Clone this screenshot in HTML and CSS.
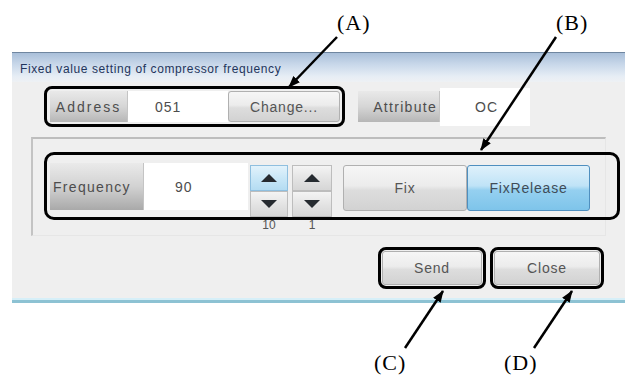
FILE: index.html
```html
<html>
<head>
  <title>Fixed value setting of compressor frequency</title>
  <link rel="stylesheet" href="styles.css">
</head>
<body>

  <div class="page">
    <div class="dialog">
      <div class="titlebar">Fixed value setting of compressor frequency</div>

      <div class="dialog-body">
        <div class="row-top">
          <div class="callout callout-a">
            <span class="label label-address">Address</span>
            <span class="field field-address">051</span>
            <button class="btn btn-change">Change...</button>
          </div>
          <span class="label label-attr">Attribute</span>
          <span class="field field-oc">OC</span>
        </div>

        <div class="group">
          <div class="callout callout-b">
            <span class="label label-freq">Frequency</span>
            <span class="field field-freq">90</span>

            <div class="spinner spinner-10">
              <button class="spin spin-up spin-hot"><span class="tri tri-up"></span></button>
              <button class="spin spin-down"><span class="tri tri-down"></span></button>
              <span class="spin-step">10</span>
            </div>
            <div class="spinner spinner-1">
              <button class="spin spin-up"><span class="tri tri-up"></span></button>
              <button class="spin spin-down"><span class="tri tri-down"></span></button>
              <span class="spin-step">1</span>
            </div>

            <button class="btn btn-fix">Fix</button>
            <button class="btn btn-release">FixRelease</button>
          </div>
        </div>

        <div class="row-bottom">
          <div class="callout callout-c">
            <button class="btn btn-send">Send</button>
          </div>
          <div class="callout callout-d">
            <button class="btn btn-close">Close</button>
          </div>
        </div>
      </div>
    </div>

    <!-- annotation layer -->
    <svg class="notes" width="625" height="376" viewBox="0 0 625 376">
      <defs>
        <marker id="head" markerWidth="12" markerHeight="9" refX="11" refY="4.5" orient="auto" markerUnits="userSpaceOnUse">
          <path d="M0,0 L12,4.5 L0,9 Z" fill="#000"/>
        </marker>
      </defs>
      <line x1="337" y1="37" x2="289" y2="87" stroke="#000" stroke-width="2.5" marker-end="url(#head)"/>
      <line x1="556" y1="37" x2="481" y2="150" stroke="#000" stroke-width="2.5" marker-end="url(#head)"/>
      <line x1="405" y1="348" x2="443" y2="291" stroke="#000" stroke-width="2.5" marker-end="url(#head)"/>
      <line x1="534" y1="348" x2="572" y2="291" stroke="#000" stroke-width="2.5" marker-end="url(#head)"/>
    </svg>
    <span class="note note-a">(A)</span>
    <span class="note note-b">(B)</span>
    <span class="note note-c">(C)</span>
    <span class="note note-d">(D)</span>
  </div>

</body>
</html>
```

FILE: styles.css
```css
body {
  margin: 0;
  background: #fff;
  font-family: 'Liberation Sans', Arial, sans-serif;
  overflow: hidden;
}

.page {
  position: relative;
  width: 625px;
  height: 376px;
  padding: 52px 0 0 12px;
  box-sizing: border-box;
}

.dialog {
  width: 613px;
}

.titlebar {
  height: 30px;
  box-sizing: border-box;
  border-top: 1px solid #6f86a0;
  padding: 9px 0 0 8px;
  font-size: 12px;
  letter-spacing: 0.6px;
  color: #1f355c;
  background: linear-gradient(#a9bfd9, #c9d8ea 40%, #e6edf5 80%, #eef1f4);
}

.dialog-body {
  background: #efefef;
  height: 221px;
  box-sizing: border-box;
  padding-top: 4px;
  border-bottom: 3px solid #8dc2d3;
  box-shadow: inset 0 -2px 0 #d6eff8;
}

/* black outline boxes drawn around controls */
.callout {
  display: flex;
  align-items: center;
  border: 3px solid #000;
  border-radius: 8px;
  box-sizing: border-box;
}

.label {
  display: flex;
  align-items: center;
  justify-content: center;
  box-sizing: border-box;
  font-size: 14px;
  letter-spacing: 1.3px;
  color: #4d4d4d;
  background: linear-gradient(#e9e9e9, #d6d6d6 50%, #b6b6b6);
  border-right: 1px solid #c4c4c4;
}

.field {
  display: flex;
  align-items: center;
  box-sizing: border-box;
  background: #fff;
  font-size: 14px;
  letter-spacing: 1px;
  color: #4d4d4d;
}

.btn {
  font-family: inherit;
  font-size: 14px;
  letter-spacing: 0.8px;
  color: #555;
  padding: 0;
  border: 1px solid #b0b0b0;
  border-radius: 3px;
  background: linear-gradient(#f6f6f6, #ececec 45%, #dddddd 55%, #d2d2d2);
  box-sizing: border-box;
}

/* top row */
.row-top {
  display: flex;
  align-items: center;
  margin-left: 32px;
}

.callout-a {
  width: 301px;
  height: 41px;
  padding: 0 2px 0 3px;
}

.label-address {
  width: 78px;
  height: 31px;
  letter-spacing: 2px;
}

.field-address {
  width: 100px;
  height: 31px;
  padding-left: 27px;
}

.btn-change {
  width: 112px;
  height: 31px;
}

.label-attr {
  width: 82px;
  height: 31px;
  margin-left: 13px;
  justify-content: flex-end;
  padding-right: 2px;
}

.field-oc {
  width: 90px;
  height: 38px;
  padding-left: 35px;
}

/* group box */
.group {
  width: 575px;
  margin: 10px 0 0 19px;
  box-sizing: border-box;
  border-top: 2px solid #bdbdbd;
  border-left: 2px solid #c3c3c3;
  border-right: 1px solid #e6e6e6;
  border-bottom: 1px solid #e6e6e6;
  padding: 13px 0 15px 11px;
}

.callout-b {
  width: 576px;
  height: 68px;
  border-radius: 10px;
  padding: 8px 0 0 3px;
  align-items: flex-start;
}

.label-freq {
  width: 94px;
  height: 47px;
  justify-content: flex-start;
  padding-left: 3px;
  background: linear-gradient(#eaeaea, #d2d2d2 50%, #a9a9a9);
}

.field-freq {
  width: 104px;
  height: 47px;
  padding-left: 31px;
}

.spinner {
  display: flex;
  flex-direction: column;
  align-items: center;
  margin-top: 2px;
  height: 52px;
}

.spinner-10 {
  width: 38px;
  margin-left: 2px;
}

.spinner-1 {
  width: 40px;
  margin-left: 4px;
}

.spin {
  width: 100%;
  height: 26px;
  padding: 0;
  display: flex;
  align-items: center;
  justify-content: center;
  border: 1px solid #bdbdbd;
  background: linear-gradient(#f4f4f4, #e4e4e4 50%, #d6d6d6);
  box-sizing: border-box;
}

.spin-hot {
  border-color: #8fbfdf;
  background: linear-gradient(#e2f2fb, #c9e7f7 50%, #b4dcf2);
}

.tri {
  width: 0;
  height: 0;
  border-left: 8px solid transparent;
  border-right: 8px solid transparent;
}

.tri-up {
  border-bottom: 8px solid #262b30;
}

.tri-down {
  border-top: 8px solid #262b30;
}

.spin-step {
  font-size: 12px;
  color: #555;
  line-height: 12px;
  margin-top: 2px;
  margin-bottom: -14px;
}

.btn-fix {
  width: 124px;
  height: 46px;
  margin: 2px 0 0 11px;
}

.btn-release {
  width: 123px;
  height: 46px;
  margin-top: 2px;
  color: #3f4c58;
  border-color: #4f8fbf;
  background: linear-gradient(#dff1fb, #bfe3f7 45%, #95d0f0 55%, #7ec4ea);
}

/* bottom row */
.row-bottom {
  display: flex;
  justify-content: flex-end;
  gap: 4px;
  margin: 11px 21px 0 0;
}

.callout-c {
  width: 108px;
  height: 42px;
  padding: 0 1px;
}

.callout-d {
  width: 114px;
  height: 42px;
  padding: 0 1px;
}

.btn-send,
.btn-close {
  width: 100%;
  height: 34px;
}

/* annotations */
.notes {
  position: absolute;
  left: 0;
  top: 0;
  pointer-events: none;
}

.note {
  position: absolute;
  font-family: 'Liberation Serif', 'Times New Roman', serif;
  font-size: 22px;
  line-height: 22px;
  letter-spacing: 1px;
  color: #000;
}

.note-a { left: 337px; top: 12px; }
.note-b { left: 556px; top: 12px; }
.note-c { left: 374px; top: 352px; }
.note-d { left: 504px; top: 352px; }
```
